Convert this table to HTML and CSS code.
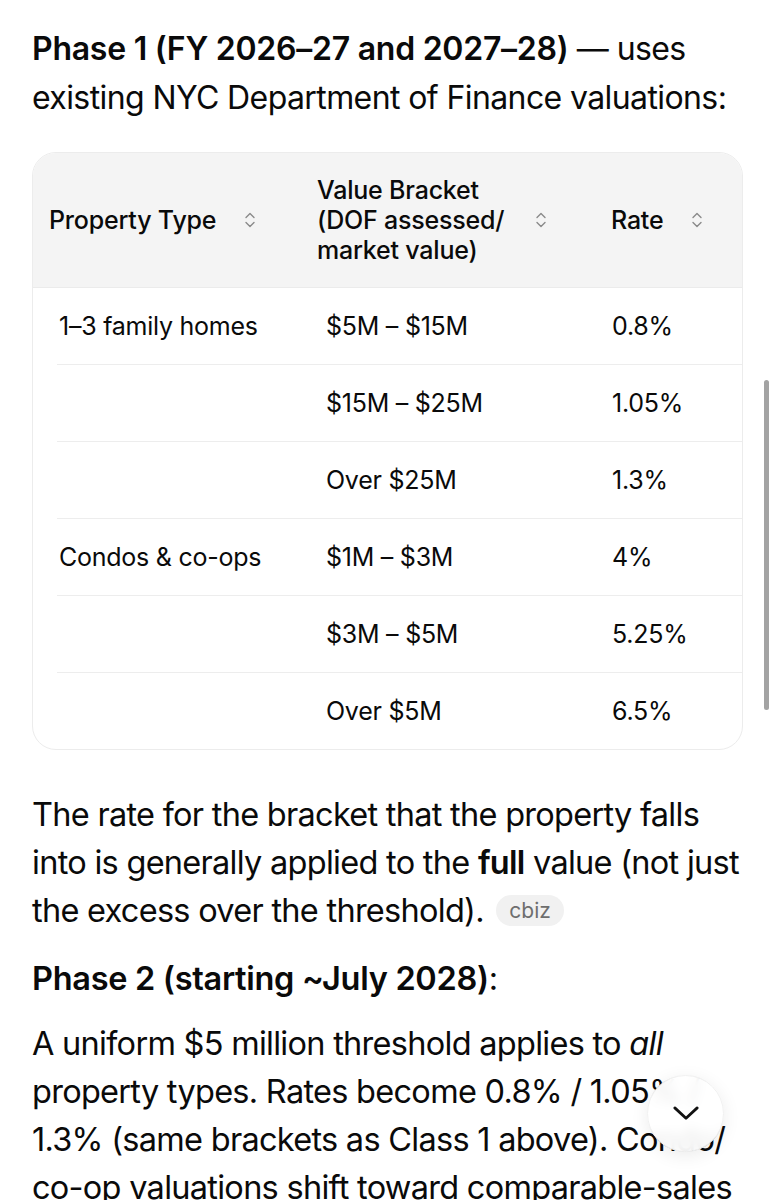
FILE: index.html
```html
<!DOCTYPE html>
<html lang="en">
<head>
<meta charset="utf-8">
<title>Phase 1 rates</title>
<link rel="stylesheet" href="styles.css">
</head>
<body>
<main class="content">
  <p class="lead"><strong>Phase 1 (FY 2026–27 and 2027–28)</strong> — uses existing NYC Department of Finance valuations:</p>

  <div class="table">
    <div class="thead">
      <div class="th c1"><span>Property Type</span><svg class="sort" viewBox="0 0 12 20"><path d="M2 7.5 6 3.5 10 7.5M2 12.5 6 16.5 10 12.5"/></svg></div>
      <div class="th c2"><span>Value Bracket (DOF assessed/ market value)</span><svg class="sort" viewBox="0 0 12 20"><path d="M2 7.5 6 3.5 10 7.5M2 12.5 6 16.5 10 12.5"/></svg></div>
      <div class="th c3"><span>Rate</span><svg class="sort" viewBox="0 0 12 20"><path d="M2 7.5 6 3.5 10 7.5M2 12.5 6 16.5 10 12.5"/></svg></div>
    </div>
    <div class="tbody">
      <div class="tr"><div class="td c1">1–3 family homes</div><div class="td c2">$5M – $15M</div><div class="td c3">0.8%</div></div>
      <div class="tr"><div class="td c1"></div><div class="td c2">$15M – $25M</div><div class="td c3">1.05%</div></div>
      <div class="tr"><div class="td c1"></div><div class="td c2">Over $25M</div><div class="td c3">1.3%</div></div>
      <div class="tr"><div class="td c1">Condos &amp; co-ops</div><div class="td c2">$1M – $3M</div><div class="td c3">4%</div></div>
      <div class="tr"><div class="td c1"></div><div class="td c2">$3M – $5M</div><div class="td c3">5.25%</div></div>
      <div class="tr"><div class="td c1"></div><div class="td c2">Over $5M</div><div class="td c3">6.5%</div></div>
    </div>
  </div>

  <p class="para">The rate for the bracket that the property falls into is generally applied to the <strong>full</strong> value (not just the excess over the threshold). <span class="cite">cbiz</span></p>

  <p class="sub"><strong>Phase 2 (starting ~July 2028)</strong>:</p>

  <p class="para">A uniform $5 million threshold applies to <em>all</em> property types. Rates become 0.8% / 1.05% / 1.3% (same brackets as Class 1 above). Condo/ co-op valuations shift toward comparable-sales</p>
</main>

<div class="scrollbar"></div>
<button class="jump" aria-label="Scroll down"><svg viewBox="0 0 30 18"><path d="M3 3 15 14 27 3"/></svg></button>
</body>
</html>
```

FILE: styles.css
```css
html, body {
  margin: 0;
  padding: 0;
  background: #ffffff;
  height: 1200px;
  overflow: hidden;
}

body {
  font-family: "Inter", "Liberation Sans", sans-serif;
  color: #0a0a0a;
  position: relative;
}

.content {
  padding: 24px 26px 0 32px;
}

.lead {
  margin: 0;
  font-size: 32px;
  line-height: 49px;
  letter-spacing: -0.6px;
}

.lead strong { letter-spacing: -0.25px; }

strong { font-weight: 600; }

.table {
  margin-top: 30px;
  margin-right: 2px;
  border: 1px solid #ececec;
  border-radius: 24px;
  overflow: hidden;
}

.thead {
  display: grid;
  grid-template-columns: 268px 294px 1fr;
  background: #f4f4f4;
  height: 134px;
  border-bottom: 1px solid #ebebeb;
}

.th {
  display: flex;
  align-items: center;
  gap: 28px;
  padding-left: 16px;
  font-size: 25px;
  line-height: 30px;
  font-weight: 500;
  letter-spacing: -0.2px;
}

.th.c2 span { width: 190px; }

.sort {
  width: 12px;
  height: 20px;
  flex: none;
  fill: none;
  stroke: #8a8a8a;
  stroke-width: 1.4;
  stroke-linecap: round;
  stroke-linejoin: round;
}

.tbody { padding-left: 24px; }

.tr {
  display: grid;
  grid-template-columns: 244px 294px 1fr;
  height: 76px;
  align-items: center;
  border-top: 1px solid #ededed;
}

.tr:first-child { border-top: 0; }

.td {
  font-size: 25px;
  letter-spacing: -0.25px;
}

.td.c1 { padding-left: 2px; }
.td.c2 { padding-left: 25px; }
.td.c3 { padding-left: 17px; }

.para {
  margin: 41px 0 0;
  font-size: 32.5px;
  line-height: 48px;
  letter-spacing: -0.72px;
}

.cite {
  display: inline-block;
  vertical-align: 4px;
  margin-left: 4px;
  padding: 0 13px;
  height: 31px;
  line-height: 31px;
  border-radius: 16px;
  background: #f1f1f1;
  color: #6e6e6e;
  font-size: 21px;
  letter-spacing: 0;
}

.sub {
  margin: 20px 0 0;
  font-size: 32.5px;
  line-height: 48px;
  letter-spacing: -0.3px;
}

.sub + .para { margin-top: 17px; }

em { font-style: italic; }

.scrollbar {
  position: absolute;
  left: 764px;
  top: 380px;
  width: 5px;
  height: 330px;
  border-radius: 3px;
  background: #a3a3a3;
}

.jump {
  position: absolute;
  left: 647px;
  top: 1075px;
  width: 77px;
  height: 77px;
  border-radius: 50%;
  border: 1px solid #f0f0f0;
  background: rgba(255, 255, 255, 0.9);
  backdrop-filter: blur(6px);
  box-shadow: 0 4px 18px rgba(0, 0, 0, 0.08);
  padding: 0;
  display: flex;
  align-items: center;
  justify-content: center;
}

.jump svg {
  width: 28px;
  height: 17px;
  fill: none;
  stroke: #111;
  stroke-width: 3;
  stroke-linecap: round;
  stroke-linejoin: round;
}
```
